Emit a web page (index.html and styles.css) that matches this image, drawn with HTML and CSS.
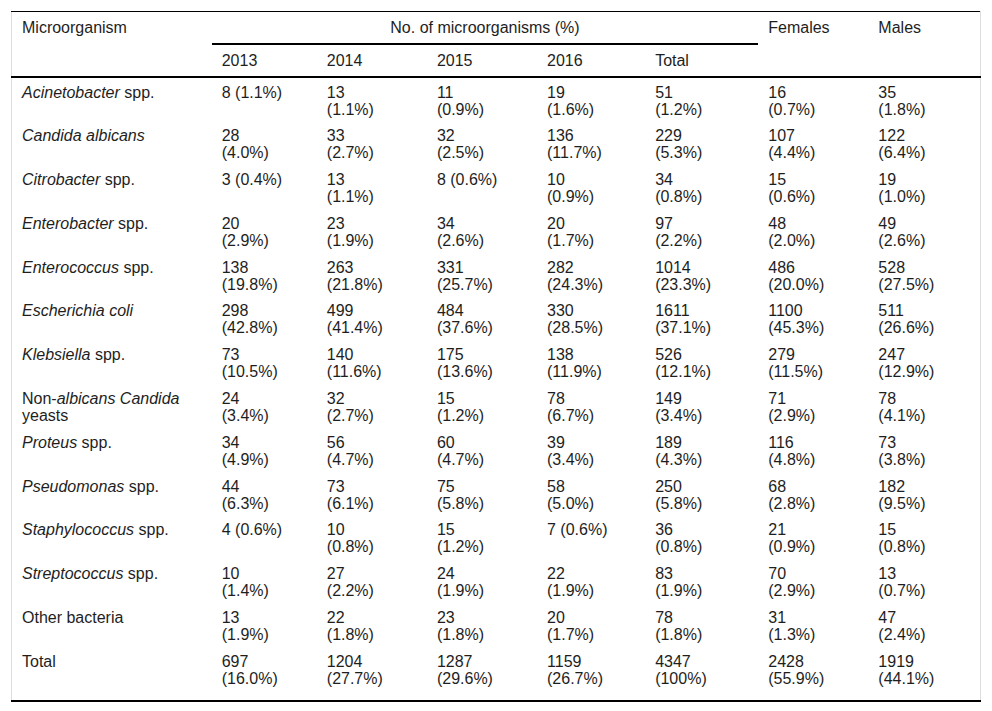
FILE: index.html
```html
<!DOCTYPE html>
<html lang="en">
<head>
<meta charset="utf-8">
<title>Microorganisms</title>
<link rel="stylesheet" href="styles.css">
</head>
<body>
<div class="page">
<table class="data">
  <colgroup>
    <col class="c-name">
    <col class="c-2013">
    <col class="c-2014">
    <col class="c-2015">
    <col class="c-2016">
    <col class="c-total">
    <col class="c-fem">
    <col class="c-male">
  </colgroup>
  <thead>
    <tr>
      <th rowspan="2" class="hd-span">Microorganism</th>
      <th colspan="5" class="hd-group">No. of microorganisms (%)</th>
      <th rowspan="2" class="hd-span">Females</th>
      <th rowspan="2" class="hd-span">Males</th>
    </tr>
    <tr class="hd-sub">
      <th>2013</th>
      <th>2014</th>
      <th>2015</th>
      <th>2016</th>
      <th>Total</th>
    </tr>
  </thead>
  <tbody>
    <tr><td><i>Acinetobacter</i> spp.</td><td><span class="v">8 (1.1%)</span></td><td><span class="v">13 (1.1%)</span></td><td><span class="v">11 (0.9%)</span></td><td><span class="v">19 (1.6%)</span></td><td><span class="v">51 (1.2%)</span></td><td><span class="v">16 (0.7%)</span></td><td><span class="v">35 (1.8%)</span></td></tr>
    <tr><td><i>Candida albicans</i></td><td><span class="v">28 (4.0%)</span></td><td><span class="v">33 (2.7%)</span></td><td><span class="v">32 (2.5%)</span></td><td><span class="v">136 (11.7%)</span></td><td><span class="v">229 (5.3%)</span></td><td><span class="v">107 (4.4%)</span></td><td><span class="v">122 (6.4%)</span></td></tr>
    <tr><td><i>Citrobacter</i> spp.</td><td><span class="v">3 (0.4%)</span></td><td><span class="v">13 (1.1%)</span></td><td><span class="v">8 (0.6%)</span></td><td><span class="v">10 (0.9%)</span></td><td><span class="v">34 (0.8%)</span></td><td><span class="v">15 (0.6%)</span></td><td><span class="v">19 (1.0%)</span></td></tr>
    <tr><td><i>Enterobacter</i> spp.</td><td><span class="v">20 (2.9%)</span></td><td><span class="v">23 (1.9%)</span></td><td><span class="v">34 (2.6%)</span></td><td><span class="v">20 (1.7%)</span></td><td><span class="v">97 (2.2%)</span></td><td><span class="v">48 (2.0%)</span></td><td><span class="v">49 (2.6%)</span></td></tr>
    <tr><td><i>Enterococcus</i> spp.</td><td><span class="v">138 (19.8%)</span></td><td><span class="v">263 (21.8%)</span></td><td><span class="v">331 (25.7%)</span></td><td><span class="v">282 (24.3%)</span></td><td><span class="v">1014 (23.3%)</span></td><td><span class="v">486 (20.0%)</span></td><td><span class="v">528 (27.5%)</span></td></tr>
    <tr><td><i>Escherichia coli</i></td><td><span class="v">298 (42.8%)</span></td><td><span class="v">499 (41.4%)</span></td><td><span class="v">484 (37.6%)</span></td><td><span class="v">330 (28.5%)</span></td><td><span class="v">1611 (37.1%)</span></td><td><span class="v">1100 (45.3%)</span></td><td><span class="v">511 (26.6%)</span></td></tr>
    <tr><td><i>Klebsiella</i> spp.</td><td><span class="v">73 (10.5%)</span></td><td><span class="v">140 (11.6%)</span></td><td><span class="v">175 (13.6%)</span></td><td><span class="v">138 (11.9%)</span></td><td><span class="v">526 (12.1%)</span></td><td><span class="v">279 (11.5%)</span></td><td><span class="v">247 (12.9%)</span></td></tr>
    <tr><td>Non-<i>albicans Candida</i> yeasts</td><td><span class="v">24 (3.4%)</span></td><td><span class="v">32 (2.7%)</span></td><td><span class="v">15 (1.2%)</span></td><td><span class="v">78 (6.7%)</span></td><td><span class="v">149 (3.4%)</span></td><td><span class="v">71 (2.9%)</span></td><td><span class="v">78 (4.1%)</span></td></tr>
    <tr><td><i>Proteus</i> spp.</td><td><span class="v">34 (4.9%)</span></td><td><span class="v">56 (4.7%)</span></td><td><span class="v">60 (4.7%)</span></td><td><span class="v">39 (3.4%)</span></td><td><span class="v">189 (4.3%)</span></td><td><span class="v">116 (4.8%)</span></td><td><span class="v">73 (3.8%)</span></td></tr>
    <tr><td><i>Pseudomonas</i> spp.</td><td><span class="v">44 (6.3%)</span></td><td><span class="v">73 (6.1%)</span></td><td><span class="v">75 (5.8%)</span></td><td><span class="v">58 (5.0%)</span></td><td><span class="v">250 (5.8%)</span></td><td><span class="v">68 (2.8%)</span></td><td><span class="v">182 (9.5%)</span></td></tr>
    <tr><td><i>Staphylococcus</i> spp.</td><td><span class="v">4 (0.6%)</span></td><td><span class="v">10 (0.8%)</span></td><td><span class="v">15 (1.2%)</span></td><td><span class="v">7 (0.6%)</span></td><td><span class="v">36 (0.8%)</span></td><td><span class="v">21 (0.9%)</span></td><td><span class="v">15 (0.8%)</span></td></tr>
    <tr><td><i>Streptococcus</i> spp.</td><td><span class="v">10 (1.4%)</span></td><td><span class="v">27 (2.2%)</span></td><td><span class="v">24 (1.9%)</span></td><td><span class="v">22 (1.9%)</span></td><td><span class="v">83 (1.9%)</span></td><td><span class="v">70 (2.9%)</span></td><td><span class="v">13 (0.7%)</span></td></tr>
    <tr><td>Other bacteria</td><td><span class="v">13 (1.9%)</span></td><td><span class="v">22 (1.8%)</span></td><td><span class="v">23 (1.8%)</span></td><td><span class="v">20 (1.7%)</span></td><td><span class="v">78 (1.8%)</span></td><td><span class="v">31 (1.3%)</span></td><td><span class="v">47 (2.4%)</span></td></tr>
    <tr><td>Total</td><td><span class="v">697 (16.0%)</span></td><td><span class="v">1204 (27.7%)</span></td><td><span class="v">1287 (29.6%)</span></td><td><span class="v">1159 (26.7%)</span></td><td><span class="v">4347 (100%)</span></td><td><span class="v">2428 (55.9%)</span></td><td><span class="v">1919 (44.1%)</span></td></tr>
  </tbody>
</table>
</div>
</body>
</html>
```

FILE: styles.css
```css
html, body {
  margin: 0;
  padding: 0;
  background: #ffffff;
}

.page {
  padding: 11px;
}

.data {
  width: 970px;
  table-layout: fixed;
  border-collapse: collapse;
  font-family: "Liberation Sans", Arial, sans-serif;
  font-size: 16px;
  line-height: 17px;
  color: #1e1e1e;
  border-top: 1px solid #000000;
  border-bottom: 2px solid #000000;
  border-left: 1px solid #dddddd;
  border-right: 1px solid #dddddd;
}

.c-name { width: 200px; }
.c-2013 { width: 105px; }
.c-2014 { width: 110px; }
.c-2015 { width: 110px; }
.c-2016 { width: 108px; }
.c-total { width: 113px; }
.c-fem { width: 110px; }
.c-male { width: 112px; }

.data th,
.data td {
  text-align: left;
  vertical-align: top;
  font-weight: normal;
  padding: 5.5px 10px 4.3px 10px;
}

.data tbody tr:last-child td {
  padding-bottom: 13px;
}

.data th {
  padding: 7px 10px 7px 10px;
}

.data .hd-group {
  text-align: center;
  border-bottom: 2px solid #000000;
}

.data .hd-span,
.data .hd-sub th {
  border-bottom: 2px solid #000000;
}

.v {
  display: block;
  max-width: 66px;
}
```
